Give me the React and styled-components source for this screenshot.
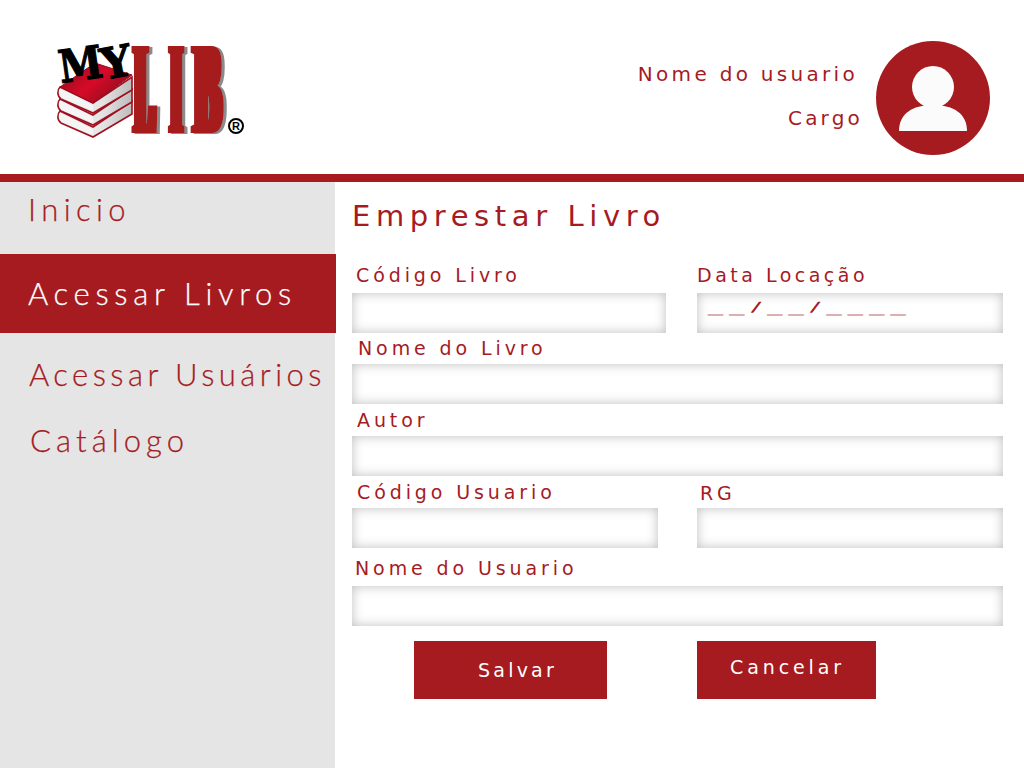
import React from "react";
import styled, { createGlobalStyle } from "styled-components";

const RED = "#a61b1f";

const GlobalStyle = createGlobalStyle`
  html, body {
    margin: 0;
    padding: 0;
    background: #fff;
    overflow: hidden;
  }
  * { box-sizing: border-box; }
`;

const Page = styled.div`
  width: 1024px;
  height: 768px;
  display: flex;
  flex-direction: column;
  font-family: "DejaVu Sans", sans-serif;
  color: ${RED};
`;

const Header = styled.header`
  height: 182px;
  flex: none;
  border-bottom: 8px solid ${RED};
  display: flex;
  justify-content: space-between;
  padding: 30px 34px 0 40px;
`;

const UserArea = styled.div`
  display: flex;
  gap: 15px;
  padding-top: 11px;
`;

const UserText = styled.div`
  display: flex;
  flex-direction: column;
  align-items: flex-end;
  padding-top: 22px;
  gap: 22px;
`;

const UserLine = styled.div`
  font-size: 20px;
  line-height: 22px;
  letter-spacing: ${(p) => p.$spacing}px;
  margin-right: ${(p) => p.$right}px;
`;

const Body = styled.div`
  flex: 1;
  display: flex;
`;

const Sidebar = styled.nav`
  width: 335px;
  flex: none;
  background: #e5e5e5;
  display: flex;
  flex-direction: column;
`;

const NavItem = styled.div`
  height: ${(p) => p.$height}px;
  width: ${(p) => (p.$active ? 336 : 335)}px;
  padding-left: ${(p) => p.$indent}px;
  padding-top: ${(p) => p.$top}px;
  font-family: "Lato", sans-serif;
  font-weight: 300;
  -webkit-text-stroke: 0.25px currentColor;
  font-size: 31px;
  line-height: 38px;
  letter-spacing: ${(p) => p.$spacing}px;
  white-space: nowrap;
  color: ${(p) => (p.$active ? "#fff" : RED)};
  background: ${(p) => (p.$active ? RED : "transparent")};
`;

const Main = styled.main`
  flex: 1;
  padding: 14px 21px 0 17px;
`;

const Title = styled.h1`
  margin: 0 0 29px 0;
  font-size: 29px;
  line-height: 40px;
  font-weight: 400;
  letter-spacing: 5.6px;
  font-family: "DejaVu Sans", sans-serif;
`;

const Row = styled.div`
  display: flex;
  justify-content: space-between;
`;

const Field = styled.div`
  width: ${(p) => p.$width || "100%"};
`;

const Label = styled.label`
  display: block;
  height: 20px;
  padding-left: ${(p) => p.$indent}px;
  margin-top: ${(p) => p.$before}px;
  margin-bottom: ${(p) => p.$after}px;
  font-size: 19px;
  line-height: 20px;
  letter-spacing: ${(p) => p.$spacing || 3.9}px;
  white-space: nowrap;
`;

const Input = styled.div`
  height: 40px;
  background: #fff;
  box-shadow: inset 0 0 12px rgba(0, 0, 0, 0.26);
`;

const DateMask = styled.div`
  height: 100%;
  display: flex;
  align-items: flex-start;
  padding-left: 11px;
  gap: 6.3px;
`;

const Blank = styled.span`
  width: 15px;
  font-size: 30px;
  line-height: 12px;
  color: #dcb0b1;
`;

const Slash = styled.span`
  width: 10.4px;
  margin-top: 8px;
  font-size: 12px;
  line-height: 12px;
  font-weight: 700;
  text-align: center;
  color: ${RED};
  transform: skewX(-24deg);
  -webkit-text-stroke: 1.1px ${RED};
`;

const Actions = styled.div`
  display: flex;
  margin: 15px 0 0 62px;
  gap: 90px;
`;

const Button = styled.button`
  width: ${(p) => p.$width}px;
  height: 58px;
  border: 0;
  padding: ${(p) => p.$pad};
  background: ${RED};
  color: #fff;
  font-family: "DejaVu Sans", sans-serif;
  font-size: 19px;
  letter-spacing: ${(p) => p.$spacing}px;
`;

const Logo = () => (
  <svg width="220" height="120" viewBox="0 0 220 120">
    <defs>
      <linearGradient id="cover" x1="0" y1="0" x2="1" y2="0.6">
        <stop offset="0" stopColor="#8c0b1c" />
        <stop offset="0.55" stopColor="#d60a28" />
        <stop offset="1" stopColor="#8f0d1e" />
      </linearGradient>
      <linearGradient id="pages" x1="0" y1="0" x2="1" y2="0">
        <stop offset="0" stopColor="#f6f6f6" />
        <stop offset="0.6" stopColor="#e4e4e4" />
        <stop offset="1" stopColor="#bcbcbc" />
      </linearGradient>
      <filter id="libFat" filterUnits="userSpaceOnUse" x="80" y="0" width="120" height="120">
        <feMorphology in="SourceGraphic" operator="dilate" radius="4 0.6" result="fat" />
        <feOffset in="fat" dx="2.5" dy="1" result="moved" />
        <feFlood floodColor="#8b8b8b" />
        <feComposite in2="moved" operator="in" result="shadow" />
        <feMerge>
          <feMergeNode in="shadow" />
          <feMergeNode in="fat" />
        </feMerge>
      </filter>
    </defs>
    {[24, 12, 0].map((dy) => (
      <g key={dy} transform={`translate(0 ${dy})`}>
        <path
          d="M20 57 C17 60 17 66 21 69 L53 83 L92 60 L92 47 L53 73 Z"
          fill="url(#pages)"
          stroke="#a01020"
          strokeWidth="1.6"
        />
        <path d="M22 60 L53 75 L53 81 L23 68 C21 65 21 63 22 60 Z" fill="#f4f4f4" />
      </g>
    ))}
    <path d="M20 57 L55 33 L92 45 L53 73 Z" fill="url(#cover)" stroke="#8f0d1e" strokeWidth="1" />
    <g filter="url(#libFat)" fontFamily="'Liberation Serif', serif" fontWeight="700" fontSize="130" fill={RED}>
      <text transform="translate(95 102) scale(0.225 1)">L</text>
      <text transform="translate(131 102) scale(0.205 1)">I</text>
      <text transform="translate(154 102) scale(0.31 1)">B</text>
    </g>
    <g fontFamily="'DejaVu Serif', serif" fontWeight="700" fill="#000" stroke="#000" strokeWidth="1.2">
      <text transform="translate(21 53) rotate(-8) scale(0.88 1)" fontSize="45">M</text>
      <text transform="translate(64 50) rotate(-11)" fontSize="43">Y</text>
    </g>
    <circle cx="196" cy="96" r="7" fill="none" stroke="#000" strokeWidth="2" />
    <text x="196" y="100" textAnchor="middle" fontFamily="'Liberation Sans', sans-serif" fontWeight="700" fontSize="11" fill="#000">R</text>
  </svg>
);

const Avatar = () => (
  <svg width="114" height="114" viewBox="0 0 114 114">
    <circle cx="57" cy="57" r="57" fill={RED} />
    <circle cx="57" cy="46" r="21" fill="#fbfbfb" />
    <path d="M23 90 C23 73 36 64 57 64 C78 64 91 73 91 90 Z" fill="#fbfbfb" />
  </svg>
);

const nav = [
  { text: "Inicio", height: 72, indent: 28, top: 8, spacing: 5.4 },
  { text: "Acessar Livros", height: 79, indent: 28, top: 20, spacing: 5.7, active: true },
  { text: "Acessar Usuários", height: 66, indent: 29, top: 22, spacing: 4.45 },
  { text: "Catálogo", height: 66, indent: 30, top: 22, spacing: 5.1 },
];

const App = () => (
  <Page>
    <GlobalStyle />
    <Header>
      <Logo />
      <UserArea>
        <UserText>
          <UserLine $spacing={3.3} $right={3}>Nome do usuario</UserLine>
          <UserLine $spacing={3.2} $right={-2}>Cargo</UserLine>
        </UserText>
        <Avatar />
      </UserArea>
    </Header>
    <Body>
      <Sidebar>
        {nav.map((item) => (
          <NavItem
            key={item.text}
            $height={item.height}
            $indent={item.indent}
            $top={item.top}
            $spacing={item.spacing}
            $active={item.active}
          >
            {item.text}
          </NavItem>
        ))}
      </Sidebar>
      <Main>
        <Title>Emprestar Livro</Title>
        <Row>
          <Field $width="314px">
            <Label $indent={4} $before={0} $after={8}>Código Livro</Label>
            <Input />
          </Field>
          <Field $width="306px">
            <Label $indent={0} $before={0} $after={8} $spacing={3.5}>Data Locação</Label>
            <Input>
              <DateMask>
                <Blank>_</Blank>
                <Blank>_</Blank>
                <Slash>/</Slash>
                <Blank>_</Blank>
                <Blank>_</Blank>
                <Slash>/</Slash>
                <Blank>_</Blank>
                <Blank>_</Blank>
                <Blank>_</Blank>
                <Blank>_</Blank>
              </DateMask>
            </Input>
          </Field>
        </Row>
        <Field>
          <Label $indent={6} $before={5} $after={6}>Nome do Livro</Label>
          <Input />
        </Field>
        <Field>
          <Label $indent={5} $before={6} $after={6}>Autor</Label>
          <Input />
        </Field>
        <Row>
          <Field $width="306px">
            <Label $indent={5} $before={6} $after={6}>Código Usuario</Label>
            <Input />
          </Field>
          <Field $width="306px">
            <Label $indent={3} $before={7} $after={5}>RG</Label>
            <Input />
          </Field>
        </Row>
        <Field>
          <Label $indent={3} $before={10} $after={8}>Nome do Usuario</Label>
          <Input />
        </Field>
        <Actions>
          <Button $width={193} $pad="0 0 1px 14px" $spacing={3.2}>Salvar</Button>
          <Button $width={179} $pad="0 0 6px 2px" $spacing={3.9}>Cancelar</Button>
        </Actions>
      </Main>
    </Body>
  </Page>
);

export default App;
